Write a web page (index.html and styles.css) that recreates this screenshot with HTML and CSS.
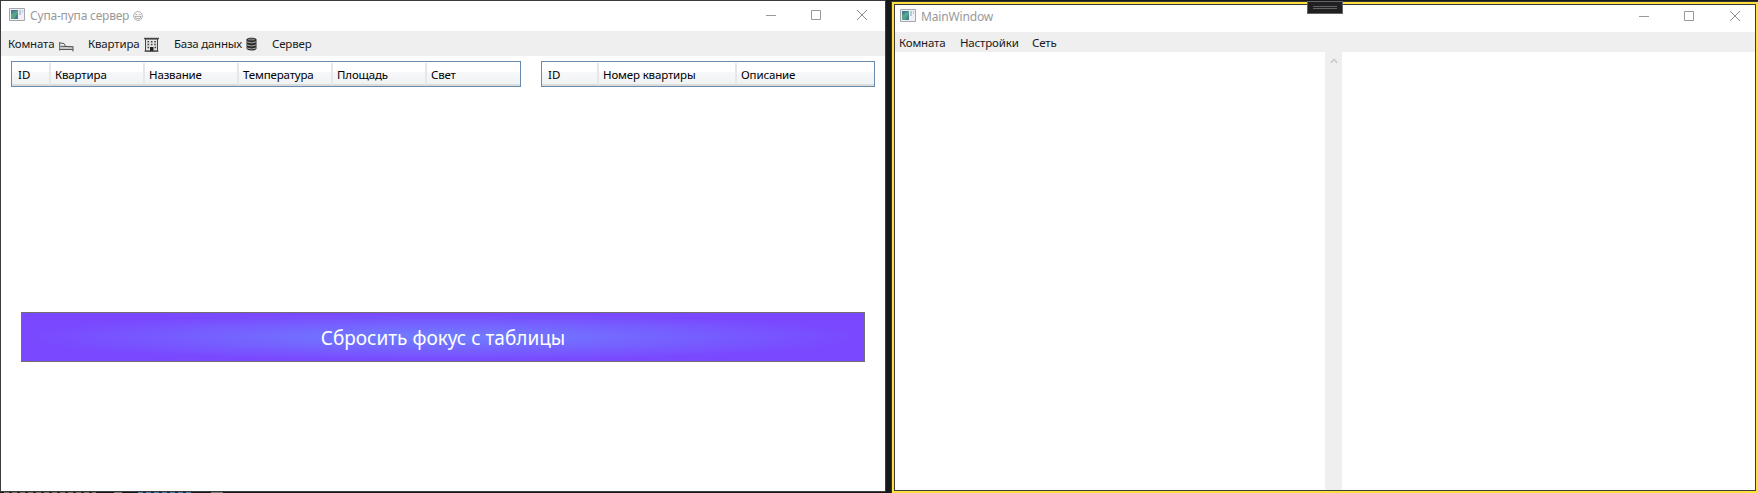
FILE: index.html
```html
<!DOCTYPE html>
<html lang="ru">
<head>
<meta charset="utf-8">
<title>Супа-пупа сервер</title>
<link rel="stylesheet" href="styles.css">
</head>
<body>
<svg width="0" height="0" class="defs">
  <symbol id="app" viewBox="0 0 16 13"><path d="M.5.5h15v12H.5z" fill="#eef0f4" stroke="#a4a6ac"/><path d="M2 2h7v9H2z" fill="#457f90"/><path d="M2 11V6l7-4v3l-4 6z" fill="#58a38a"/><path d="M10 2h2v5h-2zM13 2h1v3h-1z" fill="#b9c8dc"/></symbol>
  <symbol id="min" viewBox="0 0 10 10"><path d="M0 5.5h10" stroke="#999" fill="none"/></symbol>
  <symbol id="max" viewBox="0 0 10 10"><path d="M.5.5h9v9h-9z" stroke="#999" fill="none"/></symbol>
  <symbol id="close" viewBox="0 0 10 10"><path d="M0 0l10 10M10 0L0 10" stroke="#8c8c8c" fill="none"/></symbol>
</svg>
<main class="desktop">
  <section class="window server">
    <header class="titlebar">
      <svg class="app"><use href="#app"/></svg>
      <h1 class="title title-server">Супа-пупа сервер</h1>
      <svg class="smile" viewBox="0 0 10 10"><circle cx="5" cy="5" r="4.4" fill="none" stroke="#999" stroke-width=".8"/><path d="M2.3 3.5h2M5.7 3.5h2M2 5.4h6L6.8 7.6H3.2z" fill="none" stroke="#999" stroke-width=".8"/></svg>
      <div class="controls"><svg><use href="#min"/></svg><svg><use href="#max"/></svg><svg><use href="#close"/></svg></div>
    </header>
    <nav class="menu">
      <span class="t-room">Комната</span>
      <svg class="bed" viewBox="0 0 15 11"><path d="M1.5 5h12v3h-12z" fill="#c8c8c8"/><path d="M.7 1v8.5M1 8.5h13M14 5.5v5M1 2l4 .5 1.5 2.7M1.5 5.2l12.5.6" fill="none" stroke="#444" stroke-width=".9"/></svg>
      <span class="t-flat">Квартира</span>
      <svg class="building" viewBox="0 0 15 15"><path d="M1.5 2h12v12h-12z" fill="#e4e4e4" stroke="#444"/><path d="M0 1.5h15" stroke="#444" stroke-width="1.4"/><path d="M3.5 4.7h9M3.5 7.5h9M3.5 10.5h2M10.5 10.5h2" stroke="#444" stroke-width="1.5" stroke-dasharray="1.6 1.8"/><path d="M6 10h3.5v4H6z" fill="#222"/><path d="M.5 14.2h14" stroke="#444"/></svg>
      <span class="t-base">База данных</span>
      <svg class="database" viewBox="0 0 11 14"><path d="M.5 2.5C.5.2 10.5.2 10.5 2.5v9c0 2.5-10 2.5-10 0z" fill="#2b2b2b"/><ellipse cx="5.5" cy="2.5" rx="3.7" ry="1" fill="#777"/><path d="M1 4.9q4.5 2 9 0M1 8q4.5 2 9 0M1 11q4.5 2 9 0" stroke="#ccc" fill="none" stroke-width=".8"/></svg>
      <span class="t-server">Сервер</span>
    </nav>
    <div class="tables">
      <div class="grid rooms"><span class="c-id">ID</span><span>Квартира</span><span>Название</span><span>Температура</span><span>Площадь</span><span>Свет</span></div>
      <div class="grid flats"><span class="c-id">ID</span><span>Номер квартиры</span><span>Описание</span></div>
    </div>
    <button class="reset">Сбросить фокус с таблицы</button>
  </section>
  <section class="window client">
    <div class="dock"></div>
    <header class="titlebar">
      <svg class="app"><use href="#app"/></svg>
      <h1 class="title">MainWindow</h1>
      <div class="controls"><svg><use href="#min"/></svg><svg><use href="#max"/></svg><svg><use href="#close"/></svg></div>
    </header>
    <nav class="menu"><span class="m-room">Комната</span><span class="m-settings">Настройки</span><span class="m-net">Сеть</span></nav>
    <div class="content"><div class="scroll"><svg viewBox="0 0 8 6"><path d="M.8 5L4 1.5 7.2 5" fill="none" stroke="#cbcbcb" stroke-width="1.6"/></svg></div></div>
  </section>
</main>
</body>
</html>
```
FILE: styles.css
```css
* { box-sizing: border-box; }
body { margin: 0; background: #161819; font: 11.5px/16px "Noto Sans", sans-serif; color: #1a1a1a; overflow: hidden; }
.defs { position: absolute; }
.desktop {
  width: 1758px; height: 493px; display: flex; justify-content: space-between;
  background:
    repeating-linear-gradient(90deg, #77716c 0 5px, #222 5px 8px) 4px 492px / 92px 1px no-repeat,
    repeating-linear-gradient(90deg, #4c86a8 0 5px, #222 5px 8px) 138px 492px / 55px 1px no-repeat,
    linear-gradient(#777, #777) 114px 492px / 8px 1px no-repeat,
    linear-gradient(#777, #777) 211px 492px / 12px 1px no-repeat;
}
.window { position: relative; display: flex; flex-direction: column; background: #fff; }
.server { width: 886px; height: 492px; border: 1px solid #3b3b3d; }
.titlebar { display: flex; align-items: flex-start; flex: none; height: 30px; padding: 7px 18px 0 8px; }
.app { flex: none; width: 16px; height: 13px; margin-right: 5px; }
.title { margin: 0; font-size: 12px; line-height: 16px; font-weight: 400; color: #999; white-space: nowrap; letter-spacing: -.15px; }
.title-server { width: 99px; letter-spacing: -.2px; }
.smile { flex: none; width: 10px; height: 10px; margin: 3px 0 0 4px; }
.controls { display: flex; gap: 36px; margin-left: auto; }
.controls svg { width: 10px; height: 10px; margin-top: 2px; }
.controls svg:first-child { margin-right: -1px; }
.menu { display: flex; align-items: flex-start; flex: none; background: #efefef; white-space: nowrap; letter-spacing: -.17px; }
.menu svg, .menu span { flex: none; }
.server .menu { height: 25px; padding: 5px 0 0 7px; }
.t-room { width: 47px; }
.t-flat { width: 51px; }
.t-base { width: 68px; letter-spacing: -.25px; }
.bed { width: 15px; height: 11px; margin: 5px 14px 0 4px; }
.building { width: 15px; height: 15px; margin: 1px 15px 0 5px; }
.database { width: 11px; height: 14px; margin: 1px 15px 0 4px; }
.tables { display: flex; flex: none; gap: 20px; padding: 5px 0 0 10px; }
.grid { display: flex; height: 26px; border: 1px solid #688caf; padding: 1px; background: linear-gradient(#fff 0 42%, #f7f8fa 43%, #f1f2f4 90%, #d9dbdd 91%); }
.rooms { width: 510px; }
.flats { width: 334px; }
.grid span { flex: none; padding: 4px 0 0 4px; border-right: 2px solid #e6e7e9; white-space: nowrap; color: #000; letter-spacing: -.15px; }
.rooms span { width: 94px; }
.rooms .c-id { width: 38px; }
.flats span { width: 138px; }
.flats .c-id { width: 56px; }
.grid .c-id { padding-left: 5px; letter-spacing: 0; }
.grid span:last-child { flex: 1; border-right: 0; }
.reset { width: 844px; height: 50px; margin: 225px 0 0 20px; padding: 2px 0 0; border: 1px solid #707070; background: radial-gradient(ellipse farthest-side, #6f7fff, #7a48ff); color: #fff; font: 19px/28px "Noto Sans", sans-serif; white-space: nowrap; }
.client { width: 867px; height: 492px; margin-top: 1px; border: solid #333; border-width: 1px 0 0 1px; box-shadow: inset 0 0 0 2px #ffdf3c, inset 0 0 0 3px #3b3b3d; }
.client .titlebar { padding: 7px 15px 0 5px; margin: 0 3px; }
.client .menu { height: 20px; margin: 0 3px; padding: 3px 0 0 4px; }
.m-room { width: 61px; }
.m-settings { width: 72px; }
.client .content { flex: 1; margin: 0 3px 3px; padding-left: 430px; }
.scroll { width: 17px; height: 100%; background: #efefef; padding: 6px 0 0 5px; }
.scroll svg { display: block; width: 8px; height: 6px; }
.dock { position: absolute; left: 415px; top: -1px; width: 36px; height: 13px; border: 1px solid #646464; background: linear-gradient(#646464, #646464) 5px 4px / 24px 1px no-repeat, linear-gradient(#646464, #646464) 5px 6px / 24px 1px no-repeat, #202022; }
```
